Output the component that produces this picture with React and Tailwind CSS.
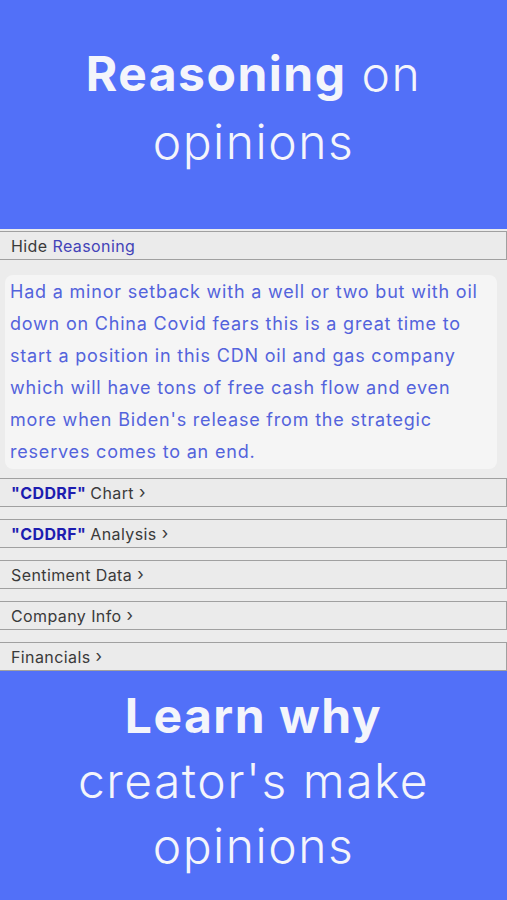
const font = { fontFamily: 'Inter, "Open Sans", sans-serif' };

function Bar({ children }) {
  return (
    <div className="h-[29px] border border-[#a0a0a0] border-l-0 bg-[#ebebeb] pl-[11px] flex items-center text-[16px] tracking-[0.4px] text-[#3a3a3a]">
      {children}
    </div>
  );
}

function Arrow() {
  return <span className="ml-[5px] text-[17px] leading-none">›</span>;
}

export default function App() {
  return (
    <div className="w-[507px] h-[900px] overflow-hidden flex flex-col bg-[#ececec]" style={font}>
      <div className="h-[229px] bg-[#5270f8] flex flex-col items-center justify-center pb-[14px] text-[#f4f5fb] text-[48px] leading-[68px] tracking-[1.5px]">
        <div>
          <span className="font-bold">Reasoning</span> <span className="font-light">on</span>
        </div>
        <div className="font-light">opinions</div>
      </div>

      <div className="flex flex-col pt-[2px]">
        <Bar>
          <span>Hide</span>
          <span className="ml-[5px] text-[#4343b8]">Reasoning</span>
        </Bar>

        <div className="ml-[5px] mr-[10px] mt-[15px] mb-[9px] rounded-[8px] bg-[#f5f5f5] px-[5px] py-[1px] text-[18px] leading-[32px] tracking-[0.8px] text-[#5363dc]">
          Had a minor setback with a well or two but with oil down on China Covid fears this is a great time to start a position in this CDN oil and gas company which will have tons of free cash flow and even more when Biden's release from the strategic reserves comes to an end.
        </div>

        <div className="flex flex-col gap-[12px]">
          <Bar>
            <span className="font-bold text-[#1d1db0]">"CDDRF"</span>
            <span className="ml-[4px]">Chart</span>
            <Arrow />
          </Bar>
          <Bar>
            <span className="font-bold text-[#1d1db0]">"CDDRF"</span>
            <span className="ml-[4px]">Analysis</span>
            <Arrow />
          </Bar>
          <Bar>
            Sentiment Data
            <Arrow />
          </Bar>
          <Bar>
            Company Info
            <Arrow />
          </Bar>
          <Bar>
            Financials
            <Arrow />
          </Bar>
        </div>
      </div>

      <div className="flex-1 bg-[#5270f8] flex flex-col items-center pt-[12px] text-[#f4f5fb] text-[48px] leading-[65px] tracking-[1.5px]">
        <div className="font-bold">Learn why</div>
        <div className="font-light">creator's make</div>
        <div className="font-light">opinions</div>
      </div>
    </div>
  );
}
